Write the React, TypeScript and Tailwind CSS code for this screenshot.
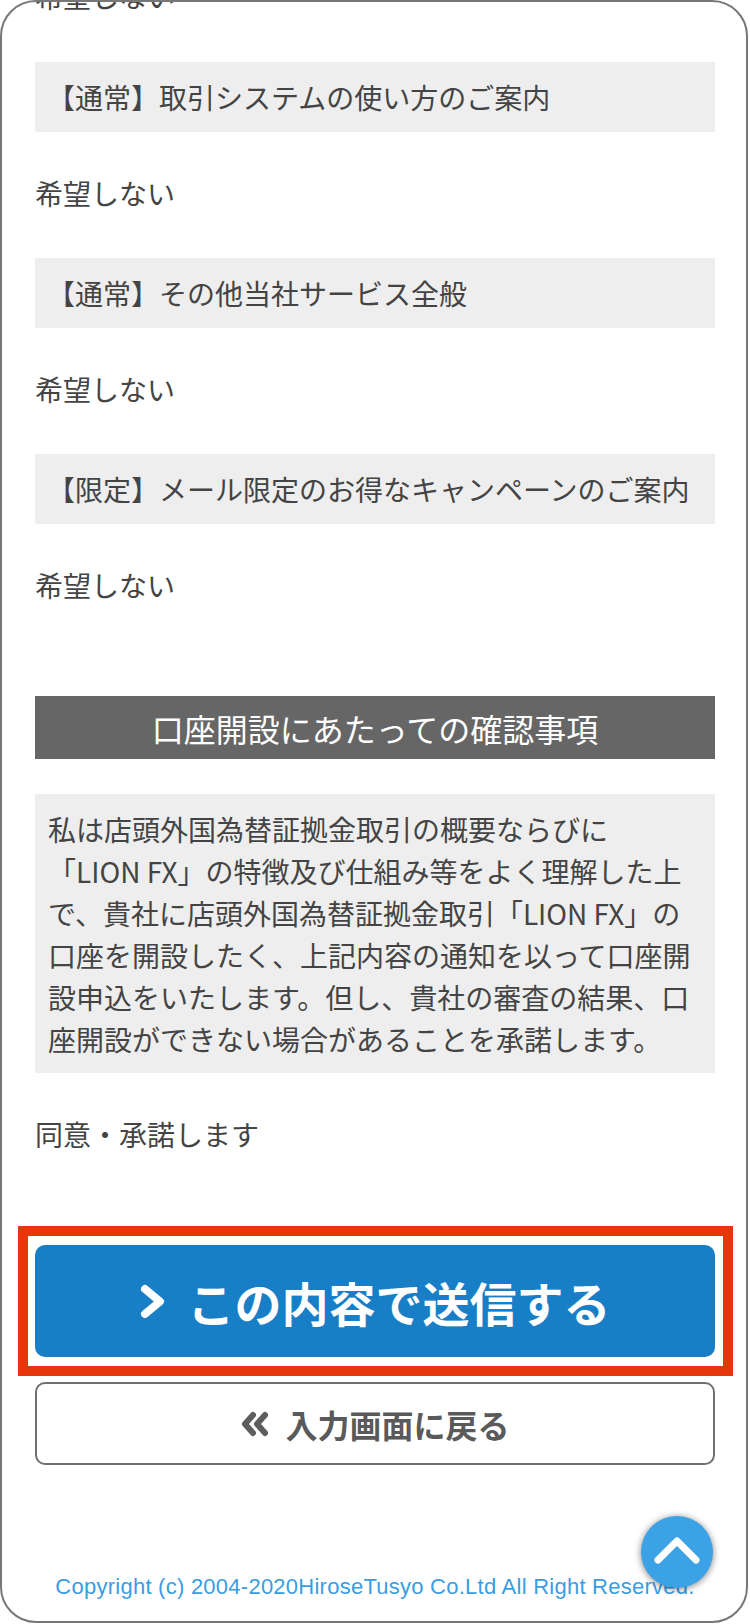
import React from "react";

const jp = '"Noto Sans CJK JP", "Noto Sans", sans-serif';

function Label({ children, className = "" }: { children: React.ReactNode; className?: string }) {
  return (
    <div className={`h-[40px] leading-[40px] text-[28px] text-[#444] whitespace-nowrap ${className}`}>{children}</div>
  );
}

function Box({ children, className = "" }: { children: React.ReactNode; className?: string }) {
  return (
    <div className={`h-[70px] bg-[#eeeeee] flex items-center px-[12px] text-[28px] text-[#444] whitespace-nowrap ${className}`}>
      {children}
    </div>
  );
}

export default function App() {
  const lines = [
    "私は店頭外国為替証拠金取引の概要ならびに",
    "「LION FX」の特徴及び仕組み等をよく理解した上",
    "で、貴社に店頭外国為替証拠金取引「LION FX」の",
    "口座を開設したく、上記内容の通知を以って口座開",
    "設申込をいたします。但し、貴社の審査の結果、口",
    "座開設ができない場合があることを承諾します。",
  ];
  return (
    <div className="w-[750px] h-[1624px] bg-white">
      <div
        className="relative w-[748px] h-[1623px] border-2 border-[#777777] rounded-[36px] overflow-hidden bg-white"
        style={{ fontFamily: jp }}
      >
        <div className="pl-[33px] pr-[31px] -mt-[26px] flex flex-col">
          <Label>希望しない</Label>
          <Box className="mt-[46px]">【通常】取引システムの使い方のご案内</Box>
          <Label className="mt-[41px]">希望しない</Label>
          <Box className="mt-[45px]">【通常】その他当社サービス全般</Box>
          <Label className="mt-[41px]">希望しない</Label>
          <Box className="mt-[45px]">【限定】メール限定のお得なキャンペーンのご案内</Box>
          <Label className="mt-[41px]">希望しない</Label>

          <div className="mt-[91px] h-[63px] bg-[#666666] flex items-center justify-center text-white text-[32px] whitespace-nowrap">
            口座開設にあたっての確認事項
          </div>

          <div className="mt-[35px] bg-[#eeeeee] pt-[14px] pb-[13px] px-[13px] text-[28px] leading-[42px] text-[#444]">
            {lines.map((l, i) => (
              <div key={i} className="whitespace-nowrap">{l}</div>
            ))}
          </div>

          <Label className="mt-[41px]">同意・承諾します</Label>

          <div className="mt-[72px] -ml-[17px] -mr-[18px] border-[10px] border-[#e5370b] pl-[7px] pr-[8px] py-[9px]">
            <div className="h-[112px] rounded-[10px] bg-[#187ec6] flex items-center justify-center gap-[22px]">
              <svg width="26" height="35" viewBox="0 0 26 35" className="shrink-0">
                <polyline points="5,5 20,17.5 5,30" fill="none" stroke="#ffffff" strokeWidth="8" strokeLinecap="round" strokeLinejoin="round" />
              </svg>
              <span className="text-white font-bold text-[47px] leading-none whitespace-nowrap">この内容で送信する</span>
            </div>
          </div>

          <div className="mt-[6px] h-[83px] rounded-[10px] border-2 border-[#707070] bg-white flex items-center justify-center gap-[15px]">
            <svg width="30" height="26" viewBox="0 0 30 26" className="shrink-0">
              <polyline points="13,4 5,13 13,22" fill="none" stroke="#5e5e5e" strokeWidth="6" strokeLinecap="round" strokeLinejoin="round" />
              <polyline points="25,4 17,13 25,22" fill="none" stroke="#5e5e5e" strokeWidth="6" strokeLinecap="round" strokeLinejoin="round" />
            </svg>
            <span className="text-[#5a5a5a] font-bold text-[32px] leading-none whitespace-nowrap">入力画面に戻る</span>
          </div>

          <div
            className="mt-[107px] h-[30px] leading-[30px] text-center text-[22px] tracking-[0.25px] text-[#3a9de2] whitespace-nowrap"
            style={{ fontFamily: '"Liberation Sans", Arial, sans-serif' }}
          >
            Copyright (c) 2004-2020HiroseTusyo Co.Ltd All Right Reserved.
          </div>
        </div>

        <div className="absolute left-[639px] top-[1514px] w-[72px] h-[72px] rounded-full bg-[#3ba2e6] shadow-[0_1px_7px_rgba(0,0,0,0.5)] flex items-center justify-center">
          <svg width="48" height="30" viewBox="0 0 48 30" className="-mt-[4px]">
            <polyline points="5,25 24,6 43,25" fill="none" stroke="#ffffff" strokeWidth="7" strokeLinecap="round" strokeLinejoin="round" />
          </svg>
        </div>
      </div>
    </div>
  );
}
